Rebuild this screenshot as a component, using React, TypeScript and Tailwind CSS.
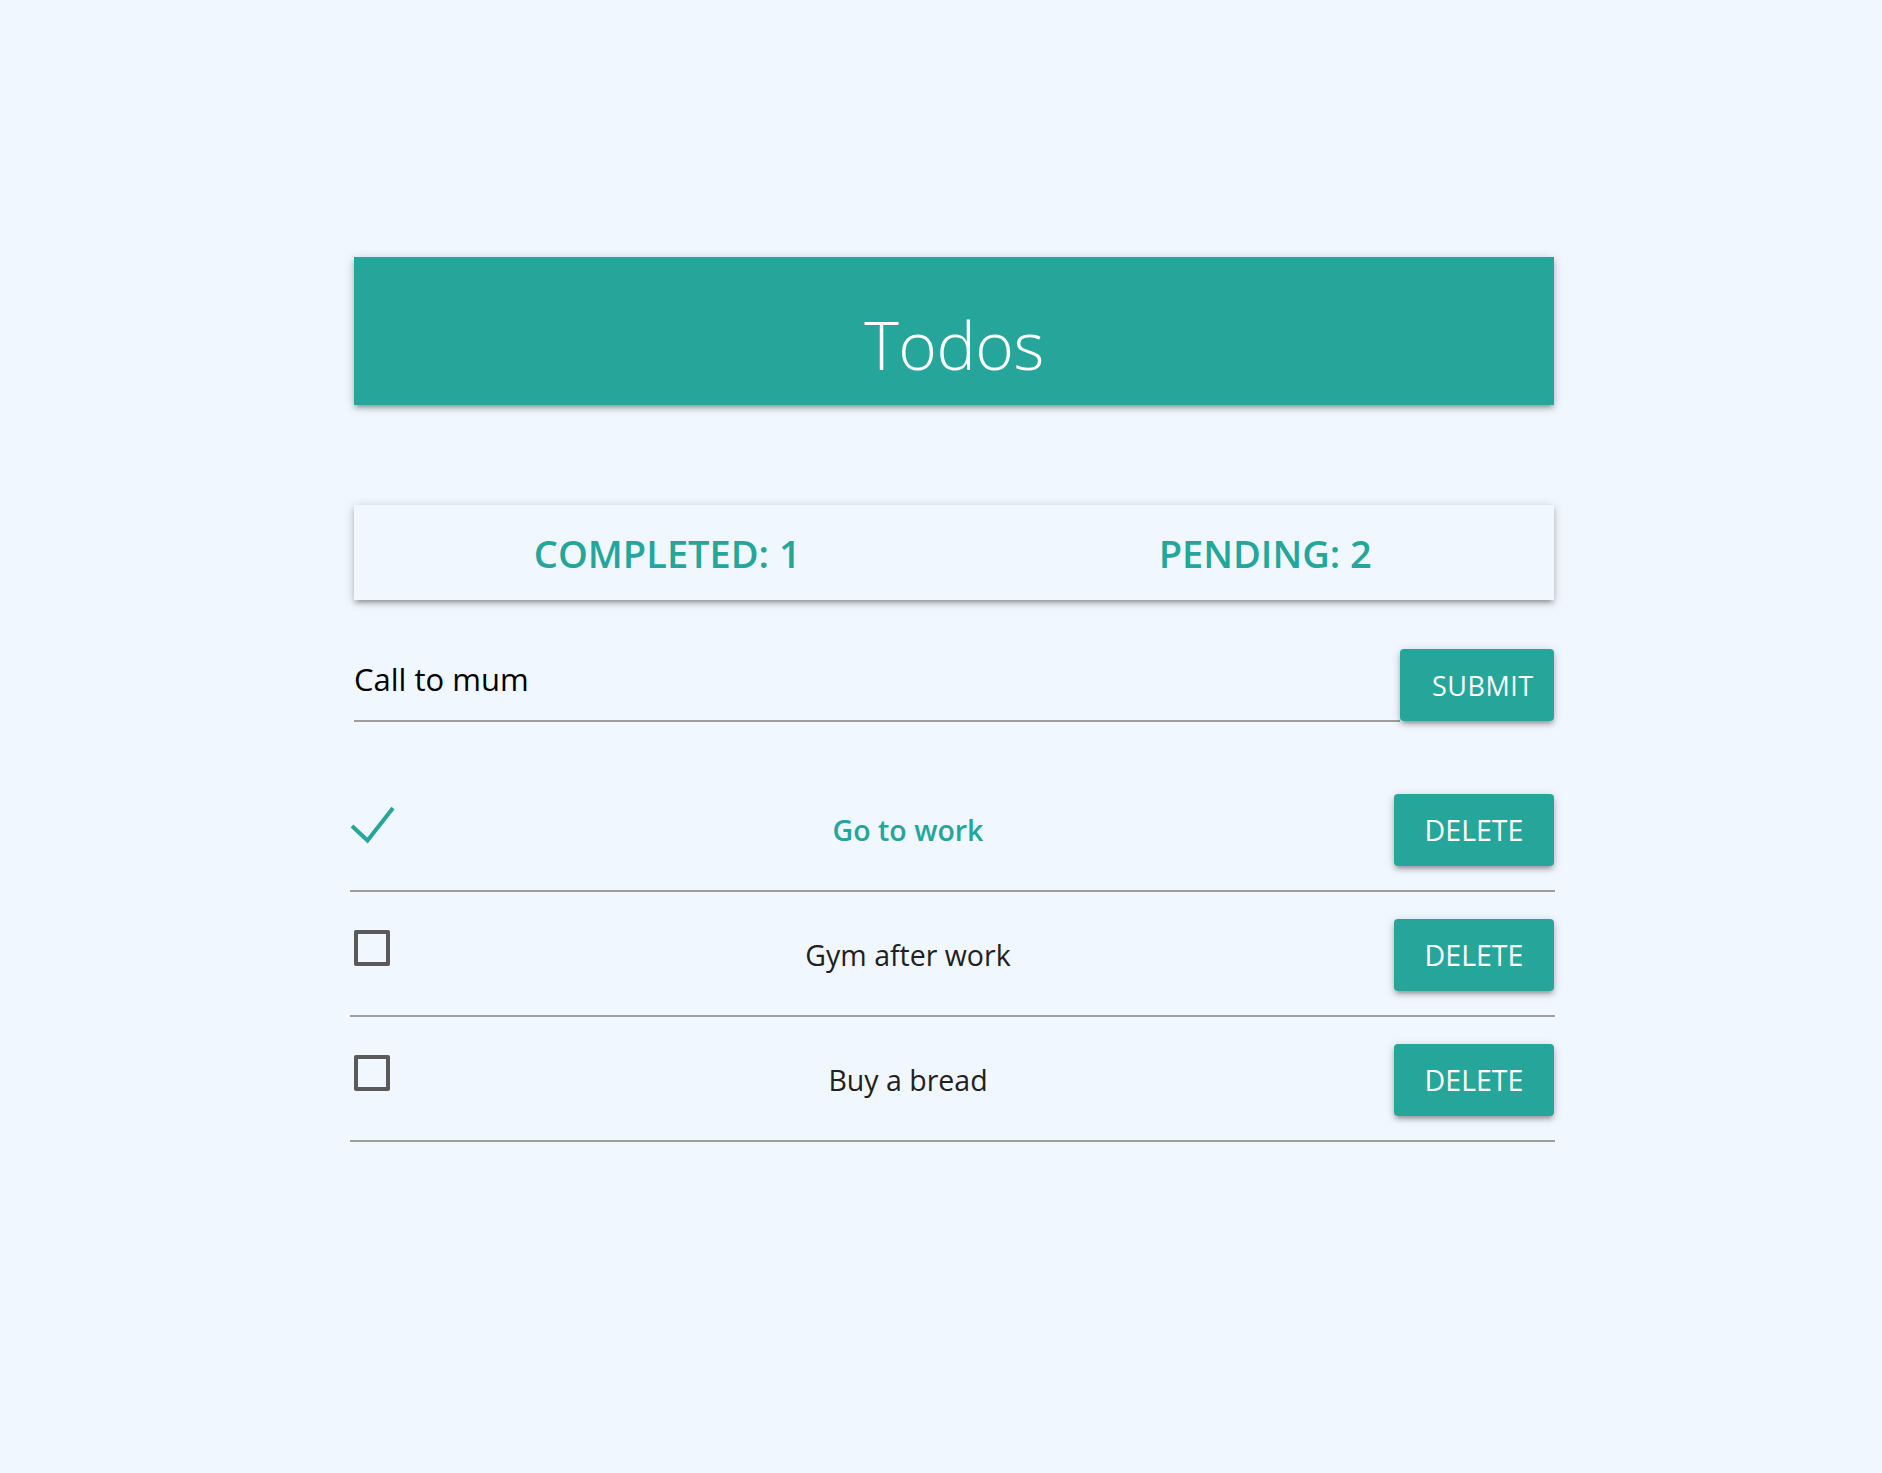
import { useState } from "react";

type Todo = {
  id: number;
  title: string;
  done: boolean;
};

const initialTodos: Todo[] = [
  { id: 1, title: "Go to work", done: true },
  { id: 2, title: "Gym after work", done: false },
  { id: 3, title: "Buy a bread", done: false },
];

const raised =
  "shadow-[0_4px_4px_0_rgba(0,0,0,0.14),0_6px_2px_-4px_rgba(0,0,0,0.12),0_2px_10px_0_rgba(0,0,0,0.2)]";

const CheckMark = () => (
  <svg
    width="48"
    height="40"
    viewBox="0 0 48 40"
    className="absolute left-[-4px] top-[0px]"
  >
    <polyline
      points="2,21 17.5,35.5 43,3"
      fill="none"
      stroke="#26a69a"
      strokeWidth="4"
      strokeLinecap="butt"
      strokeLinejoin="miter"
    />
  </svg>
);

const TodoRow = ({
  todo,
  onToggle,
  onDelete,
}: {
  todo: Todo;
  onToggle: () => void;
  onDelete: () => void;
}) => (
  <li className="pt-[27px] pb-[24px] border-b-2 border-[#9e9e9e] -ml-[4px] pl-[4px] w-[1205px]">
    <div className="flex items-start w-[1200px]">
      <div className="w-[68px] shrink-0 pt-[11px]">
        <button
          type="button"
          onClick={onToggle}
          className="relative block w-[36px] h-[36px]"
          aria-label={todo.title}
        >
          {todo.done ? (
            <CheckMark />
          ) : (
            <span className="block w-[36px] h-[36px] border-[4px] border-[#5a5a5a] rounded-[2px]" />
          )}
        </button>
      </div>
      <div className="flex-1 h-[72px] flex items-center justify-center">
        <span
          className={
            todo.done
              ? "text-[28.5px] font-semibold text-[#26a69a]"
              : "text-[28.5px] text-[#212121]"
          }
        >
          {todo.title}
        </span>
      </div>
      <button
        type="button"
        onClick={onDelete}
        className={`w-[160px] h-[72px] shrink-0 rounded-[4px] bg-[#26a69a] text-white text-[28.5px] uppercase ${raised}`}
      >
        Delete
      </button>
    </div>
  </li>
);

export default function App() {
  const [todos, setTodos] = useState<Todo[]>(initialTodos);
  const [text, setText] = useState("Call to mum");

  const completed = todos.filter((t) => t.done).length;
  const pending = todos.length - completed;

  const addTodo = () => {
    if (!text.trim()) return;
    setTodos([...todos, { id: Date.now(), title: text.trim(), done: false }]);
    setText("");
  };

  return (
    <div className="min-h-[1473px] bg-[#f0f7fe] font-['Open_Sans','Noto_Sans',sans-serif] pt-[257px]">
      <div className="ml-[354px] w-[1200px]">
        <header
          className={`h-[148px] bg-[#26a69a] flex items-center justify-center pt-[26px] ${raised}`}
        >
          <h1 className="text-white text-[66px] font-[350] leading-none tracking-[-0.5px]">
            Todos
          </h1>
        </header>

        <div
          className={`mt-[100px] h-[95px] grid grid-cols-2 items-center pl-[23px] bg-[#f0f7fe] ${raised}`}
        >
          <div className="text-center text-[38px] font-semibold text-[#26a69a] leading-none pr-[8px]">
            COMPLETED: {completed}
          </div>
          <div className="text-center text-[38px] font-semibold text-[#26a69a] leading-none pl-[11px]">
            PENDING: {pending}
          </div>
        </div>

        <form
          className="mt-[49px] flex items-start"
          onSubmit={(e) => {
            e.preventDefault();
            addTodo();
          }}
        >
          <input
            value={text}
            onChange={(e) => setText(e.target.value)}
            className="flex-1 h-[73px] bg-transparent border-b-2 border-[#9e9e9e] outline-none text-[31px] text-black pb-[11px]"
          />
          <button
            type="submit"
            className={`w-[154px] h-[72px] rounded-[4px] bg-[#26a69a] text-white text-[27px] tracking-[0.5px] pl-[32px] pr-[16px] pt-[2px] text-left ${raised}`}
          >
            SUBMIT
          </button>
        </form>

        <ul className="mt-[45px]">
          {todos.map((todo) => (
            <TodoRow
              key={todo.id}
              todo={todo}
              onToggle={() =>
                setTodos(
                  todos.map((t) =>
                    t.id === todo.id ? { ...t, done: !t.done } : t
                  )
                )
              }
              onDelete={() => setTodos(todos.filter((t) => t.id !== todo.id))}
            />
          ))}
        </ul>
      </div>
    </div>
  );
}
